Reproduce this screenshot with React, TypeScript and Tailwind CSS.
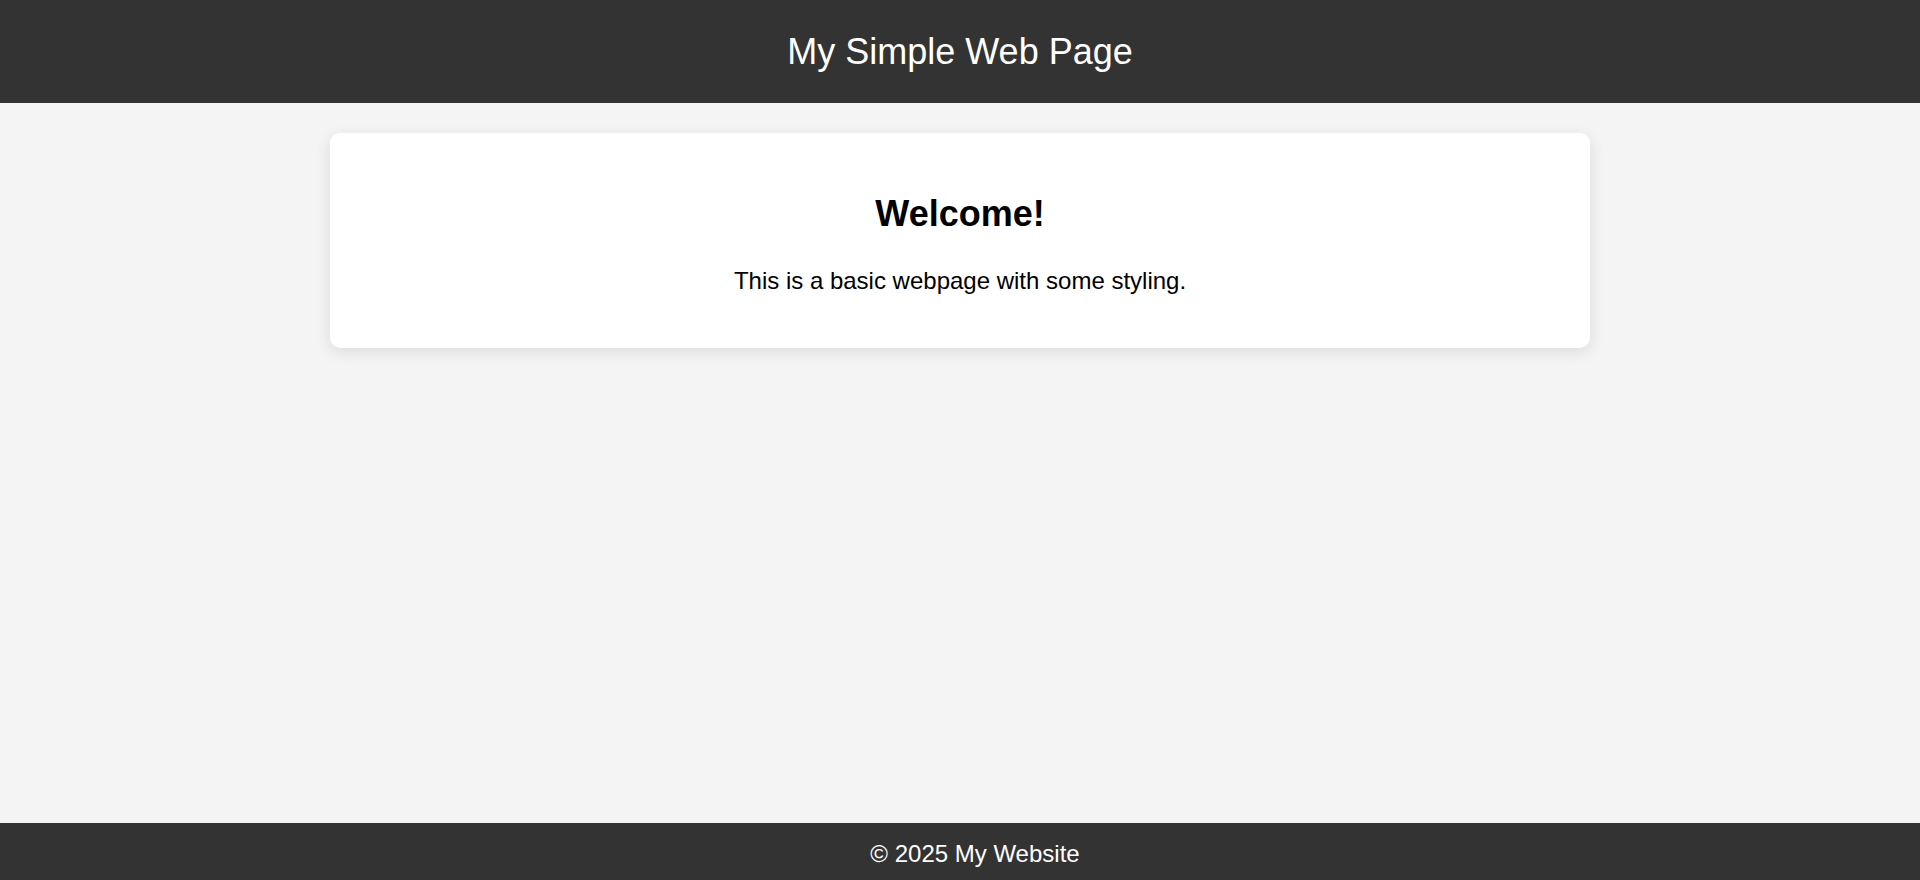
export default function App() {
  return (
    <div className="flex min-h-[880px] flex-col bg-[#f4f4f4] font-['Liberation_Sans',Arial,sans-serif] text-black">
      {/* Header */}
      <header className="flex h-[103px] items-center justify-center bg-[#333333]">
        <h1 className="text-[36px] leading-[1.15] font-normal text-white">My Simple Web Page</h1>
      </header>

      {/* Main content */}
      <main className="flex-1 px-[330px] pt-[30px]">
        <section className="flex flex-col items-center gap-[33px] rounded-[10px] bg-white pt-[60px] pb-[53px] text-center shadow-[0_4px_16px_rgba(0,0,0,0.1)]">
          <h2 className="text-[36px] leading-[1.15] font-bold">Welcome!</h2>
          <p className="text-[24px] leading-[1.15]">This is a basic webpage with some styling.</p>
        </section>
      </main>

      {/* Footer */}
      <footer className="flex h-[57px] items-center justify-center bg-[#333333] pl-[30px] pt-[4px] text-[24px] text-white">
        © 2025 My Website
      </footer>
    </div>
  );
}
